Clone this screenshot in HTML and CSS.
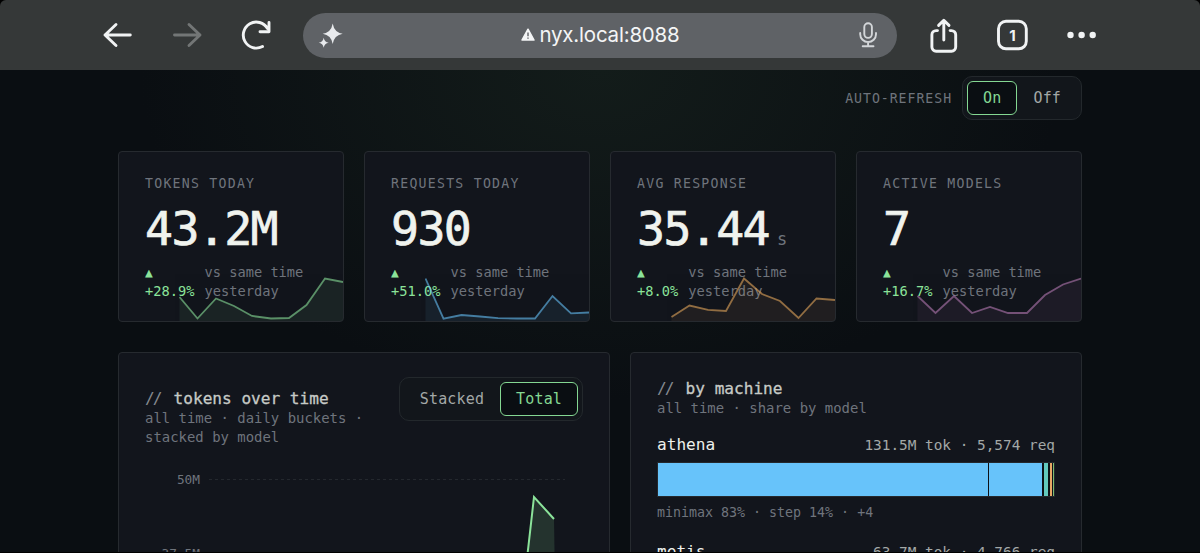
FILE: index.html
```html
<!DOCTYPE html>
<html lang="en">
<head>
    <meta charset="UTF-8">
    <meta name="viewport" content="width=device-width, initial-scale=1.0">
    <title>nyx.local:8088</title>
    <link rel="stylesheet" href="styles.css">
</head>
<body>
    <div class="browser">
        <div class="nav">
            <svg class="icon" viewBox="0 0 40 40"><path d="M32.3 20H7M18 9.5L7 20l11 10.5"/></svg>
            <svg class="icon disabled" viewBox="0 0 40 40"><path d="M7.5 20H33M22 9.5L33 20 22 30.5"/></svg>
            <svg class="icon" viewBox="0 0 40 40"><path d="M26.5 31.5A13 13 0 1 1 31.5 13.5M33 7.500v9.300h-9"/></svg>
        </div>
        <div class="url">
            <svg class="sparkle" viewBox="0 0 28 28"><path d="M17.7 2.5q1.5 9 10 10.2q-8.5 1.3-10 10.2q-1.5-8.9-10-10.2q8.5-1.2 10-10.2zM8.7 16.7q.8 4.3 5 5q-4.2.7-5 5q-.8-4.3-5-5q4.2-.7 5-5z"/></svg>
            <div class="address">
                <svg class="warn" viewBox="0 0 14 13"><path class="tri" d="M7 1.2L13 12H1z"/><path class="mark" d="M7 4.6v3.6M7 9.6v1.2"/></svg>
                <span>nyx.local:8088</span>
            </div>
            <svg class="mic" viewBox="0 0 20 28"><rect x="6.3" y="2.3" width="7.6" height="14.6" rx="3.8"/><path d="M2.2 12v1.2a7.9 7.9 0 0 0 15.8 0V12M10.1 21v4.2M4.7 25.2h10.8"/></svg>
        </div>
        <div class="nav">
            <svg class="icon" viewBox="0 0 40 40"><path d="M13.5 15.6h-1.4a4.2 4.2 0 0 0-4.2 4.2v12.3a4.2 4.2 0 0 0 4.2 4.2h15.4a4.2 4.2 0 0 0 4.2-4.2V19.8a4.2 4.2 0 0 0-4.2-4.2h-1.4M19.8 25V5.5M14.6 10.4l5.2-5.2 5.2 5.2"/></svg>
            <svg class="icon" viewBox="0 0 40 40"><rect x="5.5" y="6.3" width="27.8" height="27.5" rx="7.5"/><text x="19.5" y="25.5">1</text></svg>
            <svg class="icon dots" viewBox="0 0 40 40"><circle cx="8.5" cy="20" r="3.2"/><circle cx="19.6" cy="20" r="3.2"/><circle cx="30.7" cy="20" r="3.2"/></svg>
        </div>
    </div>

    <div class="page">
        <div class="controls">
            <span class="controls-label">AUTO-REFRESH</span>
            <div class="toggle">
                <button class="active">On</button>
                <button>Off</button>
            </div>
        </div>

        <div class="cards">
            <div class="card green">
                <div class="label">TOKENS TODAY</div>
                <div class="value">43.2M</div>
                <div class="delta">
                    <div class="pct"><span class="up">▲</span><span>+28.9%</span></div>
                    <div>vs same time<br>yesterday</div>
                </div>
                <svg class="spark" viewBox="0 0 164 44">
                    <polygon points="0.5,20 18.5,41.5 37,21.5 55,29 73,39 92,41.5 110,41 127.5,28 146,1.5 164,5 164,44 0.5,44"/>
                    <polyline points="0.5,20 18.5,41.5 37,21.5 55,29 73,39 92,41.5 110,41 127.5,28 146,1.5 164,5"/>
                </svg>
            </div>
            <div class="card blue">
                <div class="label">REQUESTS TODAY</div>
                <div class="value">930</div>
                <div class="delta">
                    <div class="pct"><span class="up">▲</span><span>+51.0%</span></div>
                    <div>vs same time<br>yesterday</div>
                </div>
                <svg class="spark" viewBox="0 0 164 44">
                    <polygon points="0.5,1.5 18.5,41.7 36.5,38 55,39.5 73,41.2 92,41.5 110,41.5 127.5,19 146,36.3 164,35.5 164,44 0.5,44"/>
                    <polyline points="0.5,1.5 18.5,41.7 36.5,38 55,39.5 73,41.2 92,41.5 110,41.5 127.5,19 146,36.3 164,35.5"/>
                </svg>
            </div>
            <div class="card orange">
                <div class="label">AVG RESPONSE</div>
                <div class="value">35.44<span class="unit">s</span></div>
                <div class="delta">
                    <div class="pct"><span class="up">▲</span><span>+8.0%</span></div>
                    <div>vs same time<br>yesterday</div>
                </div>
                <svg class="spark" viewBox="0 0 164 44">
                    <polygon points="0.5,40 18.5,28.5 37,32.8 55,34 73,1.5 91,17 109,24 127.5,41 145.5,21.5 164,23 164,44 0.5,44"/>
                    <polyline points="0.5,40 18.5,28.5 37,32.8 55,34 73,1.5 91,17 109,24 127.5,41 145.5,21.5 164,23"/>
                </svg>
            </div>
            <div class="card purple">
                <div class="label">ACTIVE MODELS</div>
                <div class="value">7</div>
                <div class="delta">
                    <div class="pct"><span class="up">▲</span><span>+16.7%</span></div>
                    <div>vs same time<br>yesterday</div>
                </div>
                <svg class="spark" viewBox="0 0 164 44">
                    <polygon points="0.5,19 18.5,36 37,19 55,36 73,30 91,36 110,36 128,18 146,7.5 164,1.5 164,44 0.5,44"/>
                    <polyline points="0.5,19 18.5,36 37,19 55,36 73,30 91,36 110,36 128,18 146,7.5 164,1.5"/>
                </svg>
            </div>
        </div>

        <div class="panels">
            <div class="panel">
                <div class="panel-head">
                    <div>
                        <h2><span class="slashes">//</span> tokens over time</h2>
                        <div class="sub">all time · daily buckets ·<br>stacked by model</div>
                    </div>
                    <div class="toggle">
                        <button>Stacked</button>
                        <button class="active">Total</button>
                    </div>
                </div>
                <svg class="chart" viewBox="0 0 438 200">
                    <text x="55" y="37">50M</text>
                    <path class="grid" d="M64 32.5H420"/>
                    <text x="55" y="111">37.5M</text>
                    <path class="grid" d="M64 106.5H420"/>
                    <polygon class="area" points="372,200 389,50 409,72 411,200"/>
                    <polyline class="line" points="372,200 389,50 409,72"/>
                </svg>
            </div>

            <div class="panel machines">
                <h2><span class="slashes">//</span> by machine</h2>
                <div class="sub">all time · share by model</div>
                <div class="machine">
                    <div class="machine-head"><span class="name">athena</span><span>131.5M tok · 5,574 req</span></div>
                    <div class="bar">
                        <div class="seg sky" style="width: 329.5px"></div>
                        <div class="seg sky" style="width: 53px"></div>
                        <div class="seg teal" style="width: 4.5px"></div>
                        <div class="seg amber" style="width: 2px"></div>
                        <div class="seg lime" style="width: 1px"></div>
                    </div>
                    <div class="split">minimax 83% · step 14% · +4</div>
                </div>
                <div class="machine">
                    <div class="machine-head"><span class="name">metis</span><span>63.7M tok · 4,766 req</span></div>
                </div>
            </div>
        </div>
    </div>
</body>
</html>
```
FILE: styles.css
```css
* {
    box-sizing: border-box;
}
body {
    margin: 0;
    height: 553px;
    overflow: hidden;
    background-color: #000;
    color: #c9cdcb;
    font-family: "DejaVu Sans Mono", "Liberation Mono", monospace;
}
h2 {
    margin: 0;
    font-size: 16.1px;
    font-weight: normal;
    line-height: 21px;
    color: #c6cac6;
    -webkit-text-stroke: 0.3px;
}

/* browser bar */
.browser {
    display: flex;
    align-items: center;
    gap: 27px;
    height: 70px;
    padding: 0 98px;
    background-color: #353838;
    border-radius: 6px 6px 0 0;
}
.nav {
    display: flex;
    gap: 29px;
}
.icon {
    width: 40px;
    height: 40px;
    fill: none;
    stroke: #f1f3f4;
    stroke-width: 2.9;
    stroke-linecap: round;
    stroke-linejoin: round;
}
.icon text {
    fill: #f1f3f4;
    stroke: none;
    font-family: Inter, sans-serif;
    font-size: 15px;
    font-weight: 700;
    text-anchor: middle;
}
.disabled {
    stroke: #737676;
}
.dots {
    fill: #f1f3f4;
    stroke: none;
}
.url {
    flex: 1;
    display: flex;
    align-items: center;
    justify-content: space-between;
    height: 45px;
    padding: 0 19px 0 12px;
    border-radius: 23px;
    background-color: #5f6266;
}
.sparkle {
    width: 28px;
    height: 28px;
    fill: #e8eaed;
}
.mic {
    width: 20px;
    height: 28px;
    fill: none;
    stroke: #d3d6d9;
    stroke-width: 1.9;
    stroke-linecap: round;
}
.address {
    display: flex;
    align-items: center;
    gap: 4px;
    margin-top: -2px;
    color: #f4f5f6;
    font-family: Inter, sans-serif;
    font-size: 20.5px;
    letter-spacing: -0.2px;
}
.warn {
    width: 14px;
    height: 13px;
}
.warn .tri {
    fill: #f4f5f6;
    stroke: #f4f5f6;
    stroke-width: 1.5;
    stroke-linejoin: round;
}
.warn .mark {
    stroke: #5f6266;
    stroke-width: 1.4;
}

/* dashboard */
.page {
    height: 482px;
    padding: 6px 118px 0;
    overflow: hidden;
    background: radial-gradient(ellipse 460px 330px at 50% 0, #131c1a, #0a0e12) #0a0e12;
}
.controls {
    display: flex;
    justify-content: flex-end;
    align-items: center;
    gap: 10px;
}
.controls-label {
    font-size: 13.2px;
    letter-spacing: 0.97px;
    color: #6f747c;
}
.toggle {
    display: flex;
    flex-shrink: 0;
    padding: 4px;
    border: 1px solid #23282c;
    border-radius: 10px;
    background-color: #12161b;
}
.toggle button {
    height: 34px;
    padding: 0 15px;
    border: 1px solid transparent;
    border-radius: 6px;
    background: none;
    color: #a3a8a7;
    font-family: inherit;
    font-size: 15px;
    letter-spacing: 0.15px;
}
.toggle .active {
    border-color: #84d792;
    background-color: #0a0e12;
    color: #84d792;
}
.cards {
    display: grid;
    grid-template-columns: repeat(4, 1fr);
    gap: 20px;
    margin-top: 31px;
}
.card {
    position: relative;
    height: 171px;
    padding: 22px 25px 20px 26px;
    overflow: hidden;
    border: 1px solid #262a2f;
    border-radius: 4px;
    background-color: #12151c;
}
.label {
    font-size: 13.2px;
    line-height: 20px;
    letter-spacing: 1.25px;
    color: #6f747c;
}
.value {
    height: 50px;
    margin-top: 10px;
    font-size: 46.5px;
    line-height: 50px;
    letter-spacing: -1.6px;
    color: #f0f3ee;
    -webkit-text-stroke: 0.7px;
}
.unit {
    margin-left: 8px;
    font-size: 17px;
    line-height: 20px;
    color: #6f747c;
    -webkit-text-stroke: 0;
}
.delta {
    display: flex;
    gap: 10px;
    margin-top: 9px;
    font-size: 13.7px;
    line-height: 19px;
    white-space: nowrap;
    color: #6f747c;
}
.pct {
    display: flex;
    flex-direction: column;
    color: #8be39a;
}
.up {
    font-size: 13px;
}
.spark {
    position: absolute;
    right: 0;
    bottom: 0;
    width: 164px;
    height: 44px;
    opacity: 0.6;
}
.spark polyline {
    fill: none;
    stroke: currentColor;
    stroke-width: 1.8;
}
.spark polygon {
    fill: currentColor;
    opacity: 0.12;
}
.green {
    color: #8be39a;
}
.blue {
    color: #67c3fa;
}
.orange {
    color: #e6a85c;
}
.purple {
    color: #b77bb5;
}

.panels {
    display: grid;
    grid-template-columns: 492px 452px;
    gap: 20px;
    margin-top: 30px;
}
.panel {
    height: 460px;
    padding: 24px 26px;
    border: 1px solid #262a2f;
    border-radius: 4px;
    background-color: #12151c;
}
.machines {
    padding-top: 25px;
}
.panel-head {
    display: flex;
    justify-content: space-between;
    align-items: baseline;
}
.slashes {
    letter-spacing: -2px;
    margin-right: 3.5px;
    color: #858a90;
    -webkit-text-stroke: 0;
}
.sub {
    font-size: 13.95px;
    line-height: 19px;
    color: #6f747c;
}
.chart {
    display: block;
    width: 438px;
    height: 200px;
}
.chart text {
    fill: #6f747c;
    font-size: 12.8px;
    text-anchor: end;
}
.grid {
    stroke: #24282e;
    stroke-dasharray: 3 3;
}
.area {
    fill: #8be39a;
    opacity: 0.15;
}
.line {
    fill: none;
    stroke: #8be39a;
    stroke-width: 2;
}
.machine {
    margin-top: 15px;
}
.machine + .machine {
    margin-top: 17px;
}
.machine-head {
    display: flex;
    justify-content: space-between;
    align-items: baseline;
    font-size: 14.4px;
    line-height: 24px;
    color: #a3a8a7;
}
.name {
    font-size: 16.1px;
    color: #eef1ec;
}
.bar {
    display: flex;
    gap: 1.5px;
    height: 35px;
    margin-top: 5px;
    border: 1px solid #24282d;
    background-color: #0d1116;
}
.seg {
    flex-shrink: 0;
}
.sky {
    background-color: #67c3fa;
}
.teal {
    background-color: #62c9bd;
}
.amber {
    background-color: #e8a765;
}
.lime {
    background-color: #7cbc72;
}
.split {
    margin-top: 6px;
    font-size: 13.3px;
    line-height: 20px;
    color: #6f747c;
}
```
